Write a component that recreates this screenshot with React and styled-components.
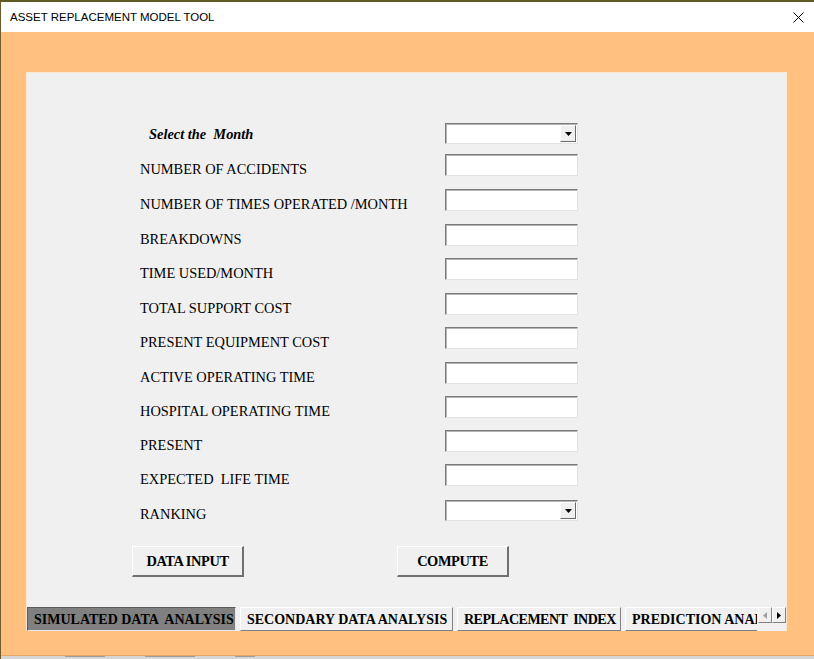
import React from "react";
import styled, { createGlobalStyle } from "styled-components";

const Global = createGlobalStyle`
  html, body { margin: 0; padding: 0; }
  body { width: 814px; height: 659px; overflow: hidden; background: #ffc080; }
  * { box-sizing: border-box; }
`;

const Window = styled.div`
  width: 814px;
  height: 659px;
  display: flex;
  flex-direction: column;
  border-top: 2px solid #5e5b22;
  border-left: 1px solid #6f5a2c;
  overflow: hidden;
`;

const TitleBar = styled.div`
  height: 30px;
  flex: none;
  background: #ffffff;
  display: flex;
  align-items: center;
  justify-content: space-between;
  padding: 0 9px 0 9px;
  font-family: "Liberation Sans", Arial, sans-serif;
  font-size: 11.5px;
  color: #000;
`;

const CloseIcon = styled.svg`
  width: 11px;
  height: 11px;
  margin-right: 1px;
`;

const Body = styled.div`
  flex: 1;
  min-height: 0;
  background: #ffc080;
  padding: 40px 27px 24px 25px;
  display: flex;
`;

const Panel = styled.div`
  flex: 1;
  min-width: 0;
  background: #f0f0f0;
  border-top: 1px solid #fbe8d4;
  border-left: 1px solid #fbe8d4;
  border-right: 1px solid #fbe8d4;
  display: flex;
  flex-direction: column;
`;

const Form = styled.div`
  display: flex;
  flex-direction: column;
  padding: 50px 0 0 113px;
  font-family: "Liberation Serif", "Times New Roman", serif;
  font-size: 14.4px;
  color: #000;
`;

const Row = styled.div`
  display: grid;
  grid-template-columns: 305px 133px;
  align-items: center;
  height: ${(p) => p.$h}px;
  margin-top: ${(p) => p.$gap}px;
`;

const Label = styled.div`
  padding-top: ${(p) => p.$shift}px;
  padding-left: ${(p) => p.$indent || 0}px;
  font-weight: ${(p) => (p.$strong ? "bold" : "normal")};
  font-style: ${(p) => (p.$strong ? "italic" : "normal")};
  white-space: pre;
  line-height: 14px;
`;

const TextBox = styled.div`
  height: 22px;
  background: #fff;
  border-top: 1px solid #7a7a7a;
  border-left: 1px solid #7a7a7a;
  border-right: 1px solid #e2e2e2;
  border-bottom: 1px solid #e2e2e2;
  box-shadow: inset 1px 1px 0 #b4b4b4;
`;

const Combo = styled(TextBox)`
  height: 21px;
  display: flex;
  justify-content: flex-end;
  padding: 1px;
`;

const DropButton = styled.div`
  width: 16px;
  height: 100%;
  background: #f0f0f0;
  border-top: 1px solid #ffffff;
  border-left: 1px solid #ffffff;
  border-right: 1px solid #696969;
  border-bottom: 1px solid #696969;
  display: flex;
  align-items: center;
  justify-content: center;
`;

const ButtonRow = styled.div`
  display: flex;
  gap: 153px;
  margin-top: 25px;
  padding-left: 105px;
`;

const Button = styled.div`
  width: 112px;
  height: 31px;
  background: #f0f0f0;
  border-top: 1px solid #ffffff;
  border-left: 1px solid #ffffff;
  border-right: 2px solid #707070;
  border-bottom: 2px solid #707070;
  display: flex;
  align-items: center;
  justify-content: center;
  font-family: "Liberation Serif", "Times New Roman", serif;
  font-weight: bold;
  font-size: 14.4px;
  color: #000;
  padding-top: 1px;
  letter-spacing: -0.4px;
`;

const TabStrip = styled.div`
  margin-top: auto;
  height: 24px;
  display: flex;
  align-items: flex-start;
`;

const TabViewport = styled.div`
  flex: 1;
  min-width: 0;
  display: flex;
  gap: 4px;
  overflow: hidden;
  height: 24px;
`;

const Tab = styled.div`
  flex: none;
  width: ${(p) => p.$w}px;
  height: 24px;
  padding: 2px 0 0 ${(p) => p.$pad}px;
  display: flex;
  align-items: center;
  white-space: pre;
  overflow: hidden;
  font-family: "Liberation Serif", "Times New Roman", serif;
  font-weight: bold;
  font-size: 14px;
  letter-spacing: ${(p) => p.$ls || 0}px;
  color: #000;
  background: ${(p) => (p.$active ? "#808080" : "#f0f0f0")};
  border-top: 1px solid ${(p) => (p.$active ? "#5a5a5a" : "#ffffff")};
  border-left: 1px solid ${(p) => (p.$active ? "#5a5a5a" : "#ffffff")};
  border-right: 1px solid ${(p) => (p.$active ? "#e8e8e8" : "#808080")};
  border-bottom: 1px solid ${(p) => (p.$active ? "#e8e8e8" : "#808080")};
`;

const Scroller = styled.div`
  flex: none;
  width: 28px;
  display: flex;
  margin-left: 1px;
`;

const ArrowButton = styled.div`
  width: 14px;
  height: 16px;
  background: #f0f0f0;
  border-top: 1px solid #ffffff;
  border-left: 1px solid #ffffff;
  border-right: 1px solid #808080;
  border-bottom: 1px solid #808080;
  display: flex;
  align-items: center;
  justify-content: center;
`;

const SheetStrip = styled.div`
  flex: none;
  height: 4px;
  background: #d6d6d6;
  border-top: 1px solid #e8a868;
  display: flex;
  gap: 40px;
  padding-left: 64px;
  overflow: hidden;
`;

const SheetMark = styled.div`
  width: ${(p) => p.$w}px;
  height: 3px;
  border-top: 1px solid #9a9a9a;
`;

const fields = [
  "NUMBER OF ACCIDENTS",
  "NUMBER OF TIMES OPERATED /MONTH",
  "BREAKDOWNS",
  "TIME USED/MONTH",
  "TOTAL SUPPORT COST",
  "PRESENT EQUIPMENT COST",
  "ACTIVE OPERATING TIME",
  "HOSPITAL OPERATING TIME",
  "PRESENT",
  "EXPECTED  LIFE TIME",
];

const gaps = [10, 13, 13, 12, 13, 12, 13, 12, 12, 12];

const DownArrow = () => (
  <svg width="7" height="4" viewBox="0 0 7 4">
    <polygon points="0,0 7,0 3.5,4" fill="#000" />
  </svg>
);

const tabs = [
  { label: "SIMULATED DATA  ANALYSIS", active: true, w: 209, pad: 6 },
  { label: "SECONDARY DATA ANALYSIS", w: 213, pad: 6 },
  { label: "REPLACEMENT  INDEX", w: 164, pad: 6, ls: -0.5 },
  { label: "PREDICTION ANALYSIS", w: 160, pad: 6 },
];

export default function App() {
  return (
    <>
      <Global />
      <Window>
        <TitleBar>
          <span>ASSET REPLACEMENT MODEL TOOL</span>
          <CloseIcon viewBox="0 0 11 11">
            <line x1="0.5" y1="0.5" x2="10.5" y2="10.5" stroke="#000" strokeWidth="1" />
            <line x1="10.5" y1="0.5" x2="0.5" y2="10.5" stroke="#000" strokeWidth="1" />
          </CloseIcon>
        </TitleBar>
        <Body>
          <Panel>
            <Form>
              <Row $gap={0} $h={21}>
                <Label $strong $indent={9} $shift={0}>
                  {"Select the  Month"}
                </Label>
                <Combo>
                  <DropButton>
                    <DownArrow />
                  </DropButton>
                </Combo>
              </Row>
              {fields.map((f, i) => (
                <Row key={f} $gap={gaps[i]} $h={22}>
                  <Label $shift={7}>{f}</Label>
                  <TextBox />
                </Row>
              ))}
              <Row $gap={14} $h={21}>
                <Label $shift={7}>RANKING</Label>
                <Combo>
                  <DropButton>
                    <DownArrow />
                  </DropButton>
                </Combo>
              </Row>
            </Form>
            <ButtonRow>
              <Button>DATA INPUT</Button>
              <Button>COMPUTE</Button>
            </ButtonRow>
            <TabStrip>
              <TabViewport>
                {tabs.map((t) => (
                  <Tab key={t.label} $active={t.active} $w={t.w} $pad={t.pad} $ls={t.ls}>
                    {t.label}
                  </Tab>
                ))}
              </TabViewport>
              <Scroller>
                <ArrowButton>
                  <svg width="4" height="7" viewBox="0 0 4 7">
                    <polygon points="4,0 4,7 0,3.5" fill="#a0a0a0" />
                  </svg>
                </ArrowButton>
                <ArrowButton>
                  <svg width="4" height="7" viewBox="0 0 4 7">
                    <polygon points="0,0 0,7 4,3.5" fill="#000" />
                  </svg>
                </ArrowButton>
              </Scroller>
            </TabStrip>
          </Panel>
        </Body>
        <SheetStrip>
          <SheetMark $w={40} />
          <SheetMark $w={50} />
          <SheetMark $w={20} />
        </SheetStrip>
      </Window>
    </>
  );
}
